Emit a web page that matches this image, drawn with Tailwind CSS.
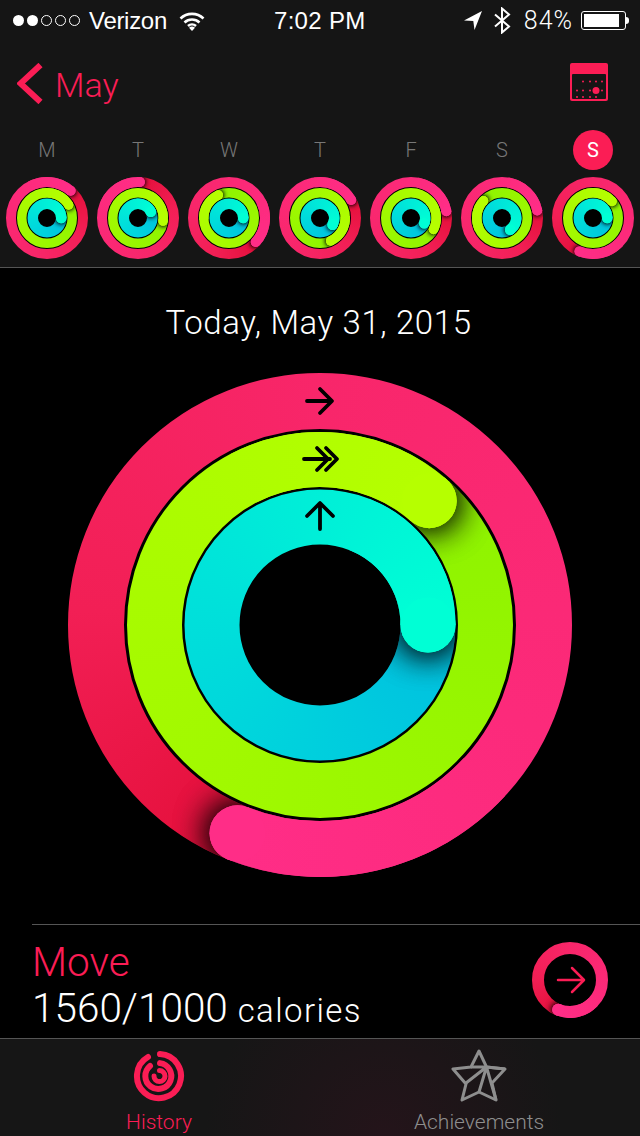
<!DOCTYPE html><html lang="en">
<head><meta charset="UTF-8"/><meta name="viewport" content="width=device-width, initial-scale=1.0"/>
<title>Activity</title><script src="https://cdn.jsdelivr.net/npm/@tailwindcss/browser@4"></script></head>
<body class="bg-black">
<div class="w-[640px] h-[1136px] overflow-hidden flex flex-col bg-black text-white font-['Roboto',sans-serif]">

<!-- STATUS + NAV -->
<header class="h-[128px] shrink-0 bg-[#151515] flex flex-col">
  <div class="h-[41px] relative flex items-center justify-between pl-[13px] pr-[11px] text-[24px] font-['Liberation_Sans',sans-serif]">
    <div class="flex items-center">
      <div class="flex gap-[3px]">
        <span class="w-[11px] h-[11px] rounded-full bg-white"></span>
        <span class="w-[11px] h-[11px] rounded-full bg-white"></span>
        <span class="w-[11px] h-[11px] rounded-full border border-white"></span>
        <span class="w-[11px] h-[11px] rounded-full border border-white"></span>
        <span class="w-[11px] h-[11px] rounded-full border border-white"></span>
      </div>
      <span class="ml-[9px] tracking-[-0.3px]">Verizon</span>
      <svg class="ml-[12px]" width="26" height="20" viewBox="0 0 26 20" fill="none" stroke="#fff" stroke-width="2.6">
        <path d="M1.500 7.500a16.500 16.500 0 0 1 23 0"/><path d="M5.500 11.500a11 11 0 0 1 15 0"/><path d="M9 15a6 6 0 0 1 8 0"/><path d="M13 20l-3-3.200a4.400 4.400 0 0 1 6 0z" fill="#fff" stroke="none"/>
      </svg>
    </div>
    <span class="absolute left-[274px] font-medium text-[24px] tracking-[0.3px]">7:02 PM</span>
    <div class="flex items-center">
      <svg width="18" height="19" viewBox="0 0 18 19"><path d="M0 9.500L18 0l-7.500 19-1.200-9z" fill="#fff"/></svg>
      <svg class="ml-[12px]" width="17" height="27" viewBox="0 0 17 27" fill="none" stroke="#fff" stroke-width="2"><path d="M1 7.500l14 12-7 6V1.500l7 6-14 12"/></svg>
      <span class="ml-[13px] text-[25px] tracking-[1px] font-['Roboto',sans-serif] font-light">84%</span>
      <div class="ml-[8px] flex items-center">
        <div class="w-[45px] h-[19px] rounded-[3px] border border-white p-[2px]"><div class="w-[35px] h-full bg-white"></div></div>
        <div class="w-[3px] h-[7px] rounded-r-sm bg-white"></div>
      </div>
    </div>
  </div>
  <div class="flex-1 flex items-start justify-between pl-[17px] pr-[32px] pt-[22px] text-[#fb1d55]">
    <div class="flex items-center h-[41px]">
      <svg width="26" height="41" viewBox="0 0 26 41" fill="none" stroke="#fb1d55" stroke-width="6"><path d="M23.500 2L3.500 20.500l20 18.500"/></svg>
      <span class="ml-[12px] mt-[3px] text-[34px] font-light leading-none">May</span>
    </div>
    <svg width="38" height="38" viewBox="0 0 38 38">
      <rect width="38" height="38" rx="2" fill="#fb1d55"/><rect x="2" y="11" width="34" height="25" rx="1" fill="#151515"/>
      <g fill="#fb1d55"><circle cx="26" cy="27.500" r="3.500"/>
        <circle cx="13" cy="18.500" r="1"/><circle cx="20" cy="18.500" r="1"/><circle cx="26" cy="18.500" r="1"/><circle cx="32" cy="18.500" r="1"/>
        <circle cx="7" cy="27.500" r="1"/><circle cx="13" cy="27.500" r="1"/><circle cx="20" cy="27.500" r="1"/><circle cx="32" cy="27.500" r="1"/>
        <circle cx="7" cy="34" r="1"/><circle cx="13" cy="34" r="1"/><circle cx="20" cy="34" r="1"/><circle cx="26" cy="34" r="1"/>
      </g>
    </svg>
  </div>
</header>

<!-- WEEK -->
<section id="week" class="h-[140px] shrink-0 bg-[#151515] border-b border-[#555] flex justify-center gap-[3px] pt-[2px]"></section>

<!-- TODAY -->
<main class="flex-1 flex flex-col items-center">
  <h1 class="mt-[33px] mr-[3px] text-[33px] leading-[44px] font-light tracking-[0.6px]">Today, May 31, 2015</h1>
  <div class="relative mt-[28px] w-[504px] h-[504px]">
    <canvas id="bigRings" width="504" height="504" class="w-[504px] h-[504px]"></canvas>
    <svg class="absolute inset-0" width="504" height="504" viewBox="0 0 504 504" fill="none" stroke="#000" stroke-width="3.800" stroke-linecap="round" stroke-linejoin="round">
      <path d="M239 28h24M252 16l12 12-12 12"/>
      <path d="M236 86h26M249 75l11 11-11 11M258 75l11 11-11 11"/>
      <path d="M252 156v-25M239 143l13-13 13 13"/>
    </svg>
  </div>
</main>

<!-- MOVE SUMMARY -->
<section class="h-[114px] shrink-0 ml-[32px] border-t border-[#555] flex justify-between items-start pr-[32px]">
  <div class="pt-[14px]">
    <div class="text-[40.500px] leading-[46px] font-light text-[#fb1d55]">Move</div>
    <div class="text-[40.500px] leading-[46px] font-light">1560/1000 <span class="text-[33px] tracking-[1.400px]">calories</span></div>
  </div>
  <div class="relative mt-[17px] w-[76px] h-[76px]">
    <canvas id="moveRing" width="76" height="76" class="w-[76px] h-[76px]"></canvas>
    <svg class="absolute inset-0" width="76" height="76" viewBox="0 0 76 76" fill="none" stroke="#fb1d55" stroke-width="2.500" stroke-linecap="round" stroke-linejoin="round"><path d="M26 38h25M40 26l12 12-12 12"/></svg>
  </div>
</section>

<!-- TAB BAR -->
<nav class="h-[98px] shrink-0 border-t border-[#555] bg-[radial-gradient(circle_at_60%_100%,#24141a,#161616_45%)] flex">
  <div class="w-[318px] flex flex-col items-center pt-[11px] text-[#fb1d55]">
    <svg width="52" height="52" viewBox="0 0 52 52" fill="none" stroke="#fb1d55" stroke-linecap="round">
      <path d="M27 4.100A22 22 0 1 1 15 7" stroke-width="6"/>
      <path d="M27 13.100A13 13 0 1 1 17 16" stroke-width="6"/>
      <path d="M26.500 20.600A5.500 5.500 0 1 1 21 26" stroke-width="5"/>
    </svg>
    <span class="mt-[8px] text-[21px] leading-[24px] font-light">History</span>
  </div>
  <div class="w-[322px] flex flex-col items-center pt-[10px] text-[#8e8e8e]">
    <svg width="56" height="54" viewBox="0 0 56 54" fill="none" stroke="#8e8e8e" stroke-width="3" stroke-linejoin="round">
      <path d="M28 2l7.500 16L54 20l-13 14 4 17-17-8-17 8 4-16L2 20l18-2z"/>
      <path d="M20 18h15.500L15 34M35.500 18L28 43M35.500 18L45 51M35.500 18L54 20"/>
    </svg>
    <span class="mt-[7px] text-[21px] leading-[24px] font-light">Achievements</span>
  </div>
</nav>
</div>

<script>
const $=id=>document.getElementById(id);
const TAU=Math.PI*2, TOP=-Math.PI/2;

// colour stops, from just past the head round to the head
const MOVE=[[0,'#e40f3a'],[.2,'#f21f55'],[.44,'#f8266a'],[1,'#ff2d87']];
const EXER=[[0,'#8ef300'],[1,'#b6ff00']];
const STAND=[[0,'#00bfe0'],[1,'#00ffd5']];

function ring(ctx,c,r,w,stops,deg,shadow){
  const end=TOP+deg/360*TAU, head=stops[stops.length-1][1];
  const g=ctx.createConicGradient(end,c,c);
  stops.forEach(([t,col])=>g.addColorStop(t,col));
  ctx.lineWidth=w; ctx.strokeStyle=g; ctx.lineCap='butt';
  ctx.beginPath(); ctx.arc(c,c,r,0,TAU); ctx.stroke();
  const hx=c+r*Math.cos(end), hy=c+r*Math.sin(end);
  // shadow of the head, kept inside the ring, drawn twice to get it dark enough
  ctx.save();
  ctx.beginPath(); ctx.arc(c,c,r+w/2,0,TAU); ctx.arc(c,c,r-w/2,0,TAU,true); ctx.clip();
  ctx.shadowColor='rgba(0,0,0,.95)'; ctx.shadowBlur=shadow;
  ctx.fillStyle=head;
  for(let n=0;n<2;n++){ctx.beginPath(); ctx.arc(hx,hy,w/2,0,TAU); ctx.fill();}
  ctx.restore();
  // head over its own shadow
  ctx.strokeStyle=g; ctx.beginPath(); ctx.arc(c,c,r,end-1.2,end); ctx.stroke();
  ctx.fillStyle=head; ctx.beginPath(); ctx.arc(hx,hy,w/2,0,TAU); ctx.fill();
}

// radii differ between the big rings and the week's small ones
function activity(cv,R,a,b,d,blur){
  const ctx=cv.getContext('2d'), c=cv.width/2;
  ctx.fillStyle='#000'; ctx.beginPath(); ctx.arc(c,c,R[0][0]-R[0][1]/2+.5,0,TAU); ctx.fill();
  ring(ctx,c,R[0][0],R[0][1],MOVE,a,blur);
  ring(ctx,c,R[1][0],R[1][1],EXER,b,blur);
  ring(ctx,c,R[2][0],R[2][1],STAND,d,blur);
}

// WEEK
const days=[['M',41,59,90],['T',3,97,64],['W',132,335,90],['T',60,155,118],['F',79,117,112],['S',78,313,145],['S',202,49,90]];
days.forEach(([l,a,b,d],i)=>{
  const col=document.createElement('div');
  col.className='w-[88px] flex flex-col items-center';
  const on=i===6;
  col.innerHTML=`<div class="w-10 h-10 rounded-full flex items-center justify-center text-[20px] ${on?'bg-[#fb1d55] text-white':'text-[#777] font-light'}">${l}</div>
    <canvas width="84" height="84" class="w-[84px] h-[84px] mt-[6px]"></canvas>`;
  $('week').appendChild(col);
  activity(col.querySelector('canvas'),[[36,10],[25.25,9.5],[14.25,10.5]],a,b,d,5);
});

// TODAY
activity($('bigRings'),[[224,56],[165.5,55],[108,55]],201.6,41.3,90,34);

// MOVE ICON
ring($('moveRing').getContext('2d'),38,32,12,MOVE,201.6,7);
</script>
</body></html>
